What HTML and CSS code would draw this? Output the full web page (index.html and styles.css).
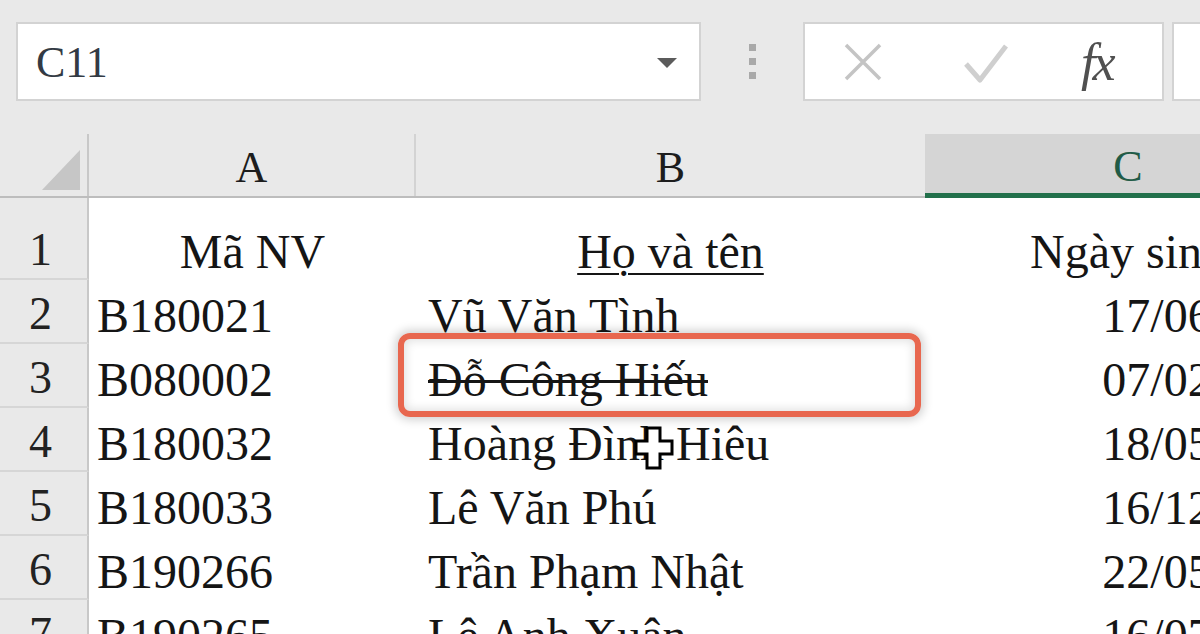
FILE: index.html
```html
<!DOCTYPE html>
<html lang="vi">
<head>
<meta charset="utf-8">
<title>Excel</title>
<link rel="stylesheet" href="styles.css">
</head>
<body>
<div class="app">
  <div class="toolbar">
    <div class="namebox">
      <span class="cellref">C11</span>
      <span class="dropdown"></span>
    </div>
    <div class="grip"><span></span><span></span><span></span></div>
    <div class="fxbox">
      <svg class="ic-x" width="40" height="40" viewBox="0 0 40 40"><path d="M3 3 L37 37 M37 3 L3 37" stroke="#c4c4c4" stroke-width="3.5" fill="none"/></svg>
      <svg class="ic-check" width="46" height="42" viewBox="0 0 46 42"><path d="M3 22 L17 38 L43 4" stroke="#cfcfcf" stroke-width="5" fill="none" stroke-linejoin="round"/></svg>
      <span class="ic-fx">fx</span>
    </div>
    <div class="formula"></div>
  </div>

  <div class="sheet">
    <div class="colhead">
      <div class="corner"><span class="tri"></span></div>
      <div class="ch ch-a">A</div>
      <div class="ch ch-b">B</div>
      <div class="ch ch-c">C</div>
    </div>

    <div class="row r1">
      <div class="rh">1</div>
      <div class="cell ca center">Mã NV</div>
      <div class="cell cb center"><u>Họ và tên</u></div>
      <div class="cell cc center">Ngày sinh</div>
    </div>
    <div class="row">
      <div class="rh">2</div>
      <div class="cell ca">B180021</div>
      <div class="cell cb">Vũ Văn Tình</div>
      <div class="cell cc right">17/06/1990</div>
    </div>
    <div class="row">
      <div class="rh">3</div>
      <div class="cell ca">B080002</div>
      <div class="cell cb"><s>Đỗ Công Hiếu</s></div>
      <div class="cell cc right">07/02/1988</div>
    </div>
    <div class="row">
      <div class="rh">4</div>
      <div class="cell ca">B180032</div>
      <div class="cell cb">Hoàng Đình Hiêu</div>
      <div class="cell cc right">18/05/1992</div>
    </div>
    <div class="row">
      <div class="rh">5</div>
      <div class="cell ca">B180033</div>
      <div class="cell cb">Lê Văn Phú</div>
      <div class="cell cc right">16/12/1991</div>
    </div>
    <div class="row">
      <div class="rh">6</div>
      <div class="cell ca">B190266</div>
      <div class="cell cb">Trần Phạm Nhật</div>
      <div class="cell cc right">22/05/1995</div>
    </div>
    <div class="row">
      <div class="rh">7</div>
      <div class="cell ca">B190265</div>
      <div class="cell cb">Lê Anh Xuân</div>
      <div class="cell cc right">16/07/1996</div>
    </div>
  </div>

  <div class="highlight"></div>
  <svg class="cursor" width="40" height="44" viewBox="0 0 40 44">
    <path d="M13 2 H26 V15 H38 V28 H26 V42 H13 V28 H2 V15 H13 Z" fill="#fff" stroke="#000" stroke-width="3"/>
  </svg>
</div>
</body>
</html>
```

FILE: styles.css
```css
* { box-sizing: border-box; }
html, body { margin: 0; padding: 0; }
body {
  width: 1200px;
  height: 634px;
  overflow: hidden;
  background: #fff;
  font-family: "Liberation Serif", "Times New Roman", serif;
  color: #161616;
}
.app { position: relative; width: 1200px; height: 634px; overflow: hidden; }

/* toolbar */
.toolbar {
  height: 134px;
  background: #e9e9e9;
  display: flex;
  align-items: flex-start;
  padding: 22px 0 0 16px;
}
.toolbar > * { flex-shrink: 0; }
.namebox {
  width: 685px;
  height: 79px;
  background: #fff;
  border: 2px solid #d3d3d3;
  display: flex;
  align-items: center;
  justify-content: space-between;
  padding: 0 22px 0 18px;
}
.cellref {
  font-size: 44px;
  color: #333a44;
  margin-top: 2px;
}
.dropdown {
  width: 0; height: 0;
  border-left: 10px solid transparent;
  border-right: 10px solid transparent;
  border-top: 10px solid #5b5b5b;
  margin-top: 2px;
}
.grip {
  width: 102px;
  height: 79px;
  display: flex;
  flex-direction: column;
  align-items: center;
  justify-content: center;
  gap: 7px;
}
.grip span { width: 7px; height: 7px; background: #a9a9a9; }
.fxbox {
  width: 361px;
  height: 79px;
  background: #fff;
  border: 2px solid #d3d3d3;
  display: flex;
  align-items: center;
  padding-left: 38px;
}
.ic-check { margin-left: 80px; margin-top: 2px; }
.ic-fx {
  margin-left: 72px;
  font-size: 52px;
  font-style: italic;
  color: #505050;
  font-family: "Liberation Serif", serif;
  margin-top: 2px;
  line-height: 1;
  letter-spacing: -3px;
}
.formula {
  width: 60px;
  height: 79px;
  margin-left: 8px;
  background: #fff;
  border: 2px solid #d3d3d3;
  border-right: none;
}

/* sheet */
.sheet { width: 1400px; }
.colhead {
  display: grid;
  grid-template-columns: 89px 327px 509px 406px;
  height: 64px;
  background: #e9e9e9;
  border-bottom: 2px solid #bdbdbd;
}
.corner {
  border-right: 2px solid #c8c8c8;
  position: relative;
}
.tri {
  position: absolute;
  left: 42px; top: 16px;
  width: 0; height: 0;
  border-left: 38px solid transparent;
  border-bottom: 40px solid #c6c6c6;
}
.ch {
  display: flex;
  align-items: center;
  justify-content: center;
  font-size: 44px;
  color: #1d1d1d;
  padding-top: 4px;
}
.ch-a { border-right: 2px solid #d3d3d3; }
.ch-c {
  background: #d5d5d5;
  color: #215b46;
  border-bottom: 5px solid #22704b;
  margin-bottom: -2px;
  padding-top: 6px;
}

.row {
  display: grid;
  grid-template-columns: 89px 327px 509px 406px;
  height: 64px;
}
.row.r1 { height: 82px; }
.rh {
  background: #e9e9e9;
  border-right: 2px solid #c8c8c8;
  border-bottom: 2px solid #d6d6d6;
  display: flex;
  align-items: flex-end;
  justify-content: center;
  font-size: 46px;
  line-height: 56px;
  color: #222;
  padding-right: 6px;
}
.cell {
  display: flex;
  align-items: flex-end;
  font-size: 48px;
  line-height: 56px;
  white-space: nowrap;
  color: #151515;
}
.ca { padding-left: 8px; }
.cb { padding-left: 12px; }
.cc { padding-right: 10px; }
.center { justify-content: center; padding-left: 0; padding-right: 0; }
.right { justify-content: flex-end; }
u { text-decoration-thickness: 2px; text-underline-offset: 5px; }
s { text-decoration-thickness: 3px; }

/* overlays */
.highlight {
  position: absolute;
  left: 398px; top: 333px;
  width: 523px; height: 84px;
  border: 6px solid #e8674f;
  border-radius: 12px;
  box-shadow: 0 0 10px 3px rgba(0,0,0,0.18), inset 0 0 10px 2px rgba(0,0,0,0.12);
}
.cursor {
  position: absolute;
  left: 634px; top: 426px;
}
```
